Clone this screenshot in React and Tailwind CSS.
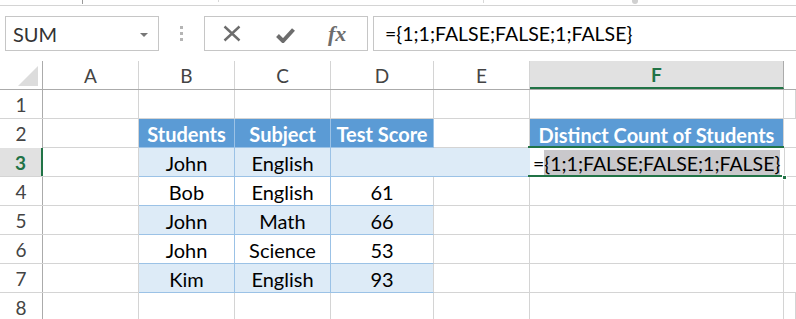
import React from 'react';

const COLS = [
  { key: 'A', w: 'w-[96px]' },
  { key: 'B', w: 'w-[96px]' },
  { key: 'C', w: 'w-[96px]' },
  { key: 'D', w: 'w-[103px]' },
  { key: 'E', w: 'w-[96px]' },
  { key: 'F', w: 'w-[254px]' },
  { key: 'G', w: 'w-[12px]' },
];

const tableRows = [
  ['John', 'English', ''],
  ['Bob', 'English', '61'],
  ['John', 'Math', '66'],
  ['John', 'Science', '53'],
  ['Kim', 'English', '93'],
];

const Cell = ({ w, className = '', children }) => (
  <div className={`${w} h-full shrink-0 flex items-center justify-center pt-[2px] border-r border-[#d4d4d4] ${className}`}>
    {children}
  </div>
);

const RowHead = ({ n, active }) => (
  <div
    className={`w-[43px] h-full shrink-0 flex items-center justify-center pt-[2px] text-[19px] ${
      active
        ? 'bg-[#e1e1e1] text-[#217346] font-bold border-r-2 border-[#217346]'
        : 'text-[#444] border-r border-[#ababab]'
    }`}
  >
    {n}
  </div>
);

const Toolbar = () => (
  <div className="h-[55px] flex items-start pt-[10px] pl-[5px]">
    <div className="w-[154px] h-[35px] border border-[#c6c6c6] flex items-center justify-between pl-[7px] pr-[10px]">
      <span className="text-[20px] text-[#333]">SUM</span>
      <span className="w-0 h-0 border-l-[4px] border-r-[4px] border-t-[4px] border-l-transparent border-r-transparent border-t-[#777] mt-[2px]" />
    </div>
    <div className="w-[45px] h-[35px] flex flex-col items-center justify-center gap-[3px]">
      <span className="w-[3px] h-[3px] bg-[#b5b5b5]" />
      <span className="w-[3px] h-[3px] bg-[#b5b5b5]" />
      <span className="w-[3px] h-[3px] bg-[#b5b5b5]" />
    </div>
    <div className="w-[164px] h-[35px] border border-[#c6c6c6] flex items-center">
      <svg className="ml-[18px]" width="18" height="17" viewBox="0 0 18 17">
        <path d="M1.5 1.5 L16.5 15.5 M16.5 1.5 L1.5 15.5" stroke="#6d6d6d" strokeWidth="2.4" fill="none" />
      </svg>
      <svg className="ml-[35px] mt-[3px]" width="19" height="15" viewBox="0 0 19 15">
        <path d="M1.5 7.5 L7 13 L17.5 1.5" stroke="#6d6d6d" strokeWidth="4" fill="none" strokeLinejoin="miter" />
      </svg>
      <span className="ml-[33px] font-['Liberation_Serif'] italic font-bold text-[22px] text-[#6d6d6d] leading-none">fx</span>
    </div>
    <div className="flex-1 h-[35px] ml-[5px] border-y border-l border-[#c6c6c6] flex items-center pl-[11px]">
      <span className="text-[19.5px] text-black">{'={1;1;FALSE;FALSE;1;FALSE}'}</span>
    </div>
  </div>
);

export default function App() {
  return (
    <div className="w-[796px] h-[319px] overflow-hidden bg-white font-['Lato',sans-serif]">
      <div className="h-[5px] flex">
        <span className="ml-[82px] w-px h-[4px] bg-[#9a9a9a]" />
        <span className="ml-[135px] w-px h-[2px] bg-[#d8d8d8]" />
        <span className="ml-[264px] w-px h-[3px] bg-[#d8d8d8]" />
        <span className="ml-[148px] w-[6px] h-[4px] rounded-b bg-[#d0d0d0]" />
      </div>
      <div className="h-px bg-[#d4d4d4]" />
      <Toolbar />

      {/* column headers */}
      <div className="h-[29px] flex border-b border-[#ababab]">
        <div className="w-[43px] h-full shrink-0 border-r border-[#ababab] flex items-end justify-end pr-[4px] pb-[3px]">
          <span className="w-0 h-0 border-l-[20px] border-b-[20px] border-l-transparent border-b-[#dcdcdc]" />
        </div>
        {COLS.map((c) =>
          c.key === 'F' ? (
            <div
              key={c.key}
              className={`${c.w} h-full shrink-0 flex items-center justify-center pt-[3px] bg-[#e1e1e1] border-b-2 border-[#217346] -mb-px border-r border-r-[#ababab] text-[19px] font-bold text-[#217346]`}
            >
              F
            </div>
          ) : c.key === 'G' ? (
            <Cell key={c.key} w={c.w} className="border-r-0" />
          ) : (
            <Cell key={c.key} w={c.w} className="text-[19px] text-[#444] pt-[3px]">
              {c.key}
            </Cell>
          )
        )}
      </div>

      {/* row 1 */}
      <div className="h-[29px] flex border-b border-[#d4d4d4]">
        <RowHead n={1} />
        {COLS.map((c) => (
          <Cell key={c.key} w={c.w} />
        ))}
      </div>

      {/* row 2 */}
      <div className="h-[29px] flex">
        <RowHead n={2} />
        <div className="w-[96px] h-full shrink-0 border-r border-b border-[#d4d4d4]" />
        {['Students', 'Subject', 'Test Score'].map((t, i) => (
          <div
            key={t}
            className={`${i === 2 ? 'w-[103px]' : 'w-[96px]'} h-full shrink-0 flex items-center justify-center pt-[2px] bg-[#5b9bd5] text-white font-bold text-[20px] border-r border-b border-[#9bc2e6]`}
          >
            {t}
          </div>
        ))}
        <div className="w-[96px] h-full shrink-0 border-r border-b border-[#d4d4d4]" />
        <div className="w-[254px] h-full shrink-0 flex items-center justify-center pt-[2px] bg-[#5b9bd5] text-white font-bold text-[20px] border-r border-[#d4d4d4]">
          Distinct Count of Students
        </div>
        <div className="w-[12px] h-full shrink-0 border-b border-[#d4d4d4]" />
      </div>

      {/* table body rows 3-7 */}
      {tableRows.map((r, idx) => {
        const n = idx + 3;
        const band = idx % 2 === 0;
        const bg = band ? 'bg-[#ddebf7]' : 'bg-white';
        const active = n === 3;
        return (
          <div key={n} className="h-[29px] flex">
            <div className="w-[43px] h-full shrink-0 border-b border-[#d4d4d4]">
              <RowHead n={n} active={active} />
            </div>
            <div className="w-[96px] h-full shrink-0 border-r border-b border-[#d4d4d4]" />
            {r.map((t, i) => (
              <div
                key={i}
                className={`${i === 2 ? 'w-[103px]' : 'w-[96px]'} h-full shrink-0 flex items-center justify-center pt-[2px] ${bg} text-black text-[20px] border-b border-[#9bc2e6] ${
                  i === 2 && active ? '' : 'border-r'
                } ${i === 2 && !active ? 'border-r-[#d4d4d4]' : 'border-r-[#9bc2e6]'}`}
              >
                {t}
              </div>
            ))}
            {active ? (
              <>
                <div className="w-[96px] h-full shrink-0 bg-[#ddebf7] border-b border-[#9bc2e6]" />
                <div className="w-[254px] h-full shrink-0 relative bg-white flex items-center pl-[3px] text-[19.5px] text-black">
                  <span className="absolute left-[-2px] right-0 -top-[2px] h-[2px] bg-[#217346]" />
                  <span className="absolute left-[-2px] right-0 bottom-0 h-[2px] bg-[#217346]" />
                  <span className="absolute right-[-3px] -bottom-[3px] w-[5px] h-[5px] bg-[#217346] border border-white" />
                  <span className="pt-[2px]">=</span>
                  <span className="bg-[#c9c8cb] h-[26px] flex items-center pt-[2px]">{'{1;1;FALSE;FALSE;1;FALSE}'}</span>
                </div>
                <div className="w-[12px] h-full shrink-0 border-l border-b border-[#d4d4d4]" />
              </>
            ) : (
              <>
                <div className="w-[96px] h-full shrink-0 border-r border-b border-[#d4d4d4]" />
                <div className="w-[254px] h-full shrink-0 border-r border-b border-[#d4d4d4]" />
                <div className="w-[12px] h-full shrink-0 border-b border-[#d4d4d4]" />
              </>
            )}
          </div>
        );
      })}

      {/* row 8 */}
      <div className="h-[29px] flex border-b border-[#d4d4d4]">
        <RowHead n={8} />
        {COLS.map((c) => (
          <Cell key={c.key} w={c.w} />
        ))}
      </div>
    </div>
  );
}
